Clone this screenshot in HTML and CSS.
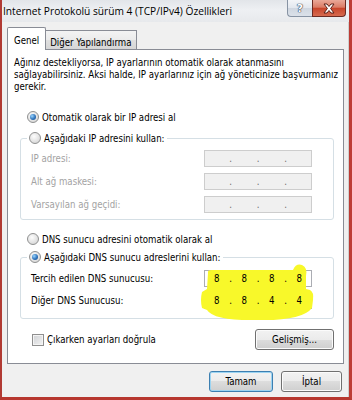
FILE: index.html
```html
<!DOCTYPE html>
<html lang="tr">
<head>
<meta charset="utf-8">
<title>Internet Protokolü sürüm 4 (TCP/IPv4) Özellikleri</title>
<link rel="stylesheet" href="styles.css">
</head>
<body>
<div class="window">
  <div class="titlebar">
    <span class="title">Internet Protokolü sürüm 4 (TCP/IPv4) Özellikleri</span>
    <div class="caption">
      <span class="cap help">?</span>
      <span class="cap close">
        <svg width="14" height="11" viewBox="0 0 14 11">
          <path d="M2 1 L5 1 L7 3.5 L9 1 L12 1 L8.6 5.5 L12 10 L9 10 L7 7.5 L5 10 L2 10 L5.4 5.5 Z" fill="#fff" stroke="#5a2018" stroke-width="1" stroke-linejoin="round"/>
        </svg>
      </span>
    </div>
  </div>

  <div class="dialog">
    <div class="tabs">
      <div class="tab active">Genel</div>
      <div class="tab">Diğer Yapılandırma</div>
    </div>

    <div class="panel">
      <p class="intro">Ağınız destekliyorsa, IP ayarlarının otomatik olarak atanmasını<br>sağlayabilirsiniz. Aksi halde, IP ayarlarınız için ağ yöneticinize başvurmanız<br>gerekir.</p>

      <div class="radio-row opt"><span class="radio checked"></span>Otomatik olarak bir IP adresi al</div>

      <div class="group group-ip">
        <div class="radio-row legend"><span class="radio"></span>Aşağıdaki IP adresini kullan:</div>
        <div class="field disabled first">
          <span class="label">IP adresi:</span>
          <div class="ip"><span class="oct"></span><span class="dot">.</span><span class="oct"></span><span class="dot">.</span><span class="oct"></span><span class="dot">.</span><span class="oct"></span></div>
        </div>
        <div class="field disabled">
          <span class="label">Alt ağ maskesi:</span>
          <div class="ip"><span class="oct"></span><span class="dot">.</span><span class="oct"></span><span class="dot">.</span><span class="oct"></span><span class="dot">.</span><span class="oct"></span></div>
        </div>
        <div class="field disabled">
          <span class="label">Varsayılan ağ geçidi:</span>
          <div class="ip"><span class="oct"></span><span class="dot">.</span><span class="oct"></span><span class="dot">.</span><span class="oct"></span><span class="dot">.</span><span class="oct"></span></div>
        </div>
      </div>

      <div class="radio-row opt opt-dns"><span class="radio"></span>DNS sunucu adresini otomatik olarak al</div>

      <div class="group group-dns">
        <div class="radio-row legend"><span class="radio checked"></span>Aşağıdaki DNS sunucu adreslerini kullan:</div>
        <div class="field first">
          <span class="label">Tercih edilen DNS sunucusu:</span>
          <div class="ip"><span class="oct">8</span><span class="dot">.</span><span class="oct">8</span><span class="dot">.</span><span class="oct">8</span><span class="dot">.</span><span class="oct">8</span></div>
        </div>
        <div class="field second">
          <span class="label">Diğer DNS Sunucusu:</span>
          <div class="ip"><span class="oct">8</span><span class="dot">.</span><span class="oct">8</span><span class="dot">.</span><span class="oct">4</span><span class="dot">.</span><span class="oct">4</span></div>
        </div>
      </div>

      <div class="bottom-row">
        <div class="check-row"><span class="checkbox"></span>Çıkarken ayarları doğrula</div>
        <button class="btn advanced">Gelişmiş...</button>
      </div>
    </div>

    <div class="footer">
      <button class="btn default">Tamam</button>
      <button class="btn">İptal</button>
    </div>
  </div>

  <svg class="highlight" width="352" height="400" viewBox="0 0 352 400">
    <path d="M208 273 Q207 270 212 270 L293 270 Q296 263 302 265 Q308 268 306 276 L306 289 L310 290 Q314 292 313 300 L312 308 Q302 321 258 320 Q214 321 207 310 L202 308 Q200 300 202 292 L207 289 Z" fill="#f8f82a"/>
  </svg>
</div>
</body>
</html>
```

FILE: styles.css
```css
* {
  box-sizing: border-box;
}

html,
body {
  margin: 0;
  padding: 0;
}

body {
  width: 352px;
  height: 400px;
  overflow: hidden;
  background: #f0f0f0;
  font-family: "DejaVu Sans Condensed", "DejaVu Sans", sans-serif;
  font-stretch: condensed;
  font-size: 9.6px;
  color: #000;
}

.window {
  position: relative;
  width: 352px;
  height: 400px;
  display: flex;
  flex-direction: column;
  background: #f0f0f0;
  border-left: 2px solid #b13a33;
  border-right: 3px solid #bd3c35;
  border-bottom: 3px solid #b7372f;
  box-shadow: inset -1px 0 0 #cfcfcf;
}

/* title bar */
.titlebar {
  height: 22px;
  flex: none;
  display: flex;
  align-items: flex-start;
  background: linear-gradient(#e2e5e9, #eef0f3 45%, #e7e9ec);
}

.title {
  font-family: "Open Sans", sans-serif;
  font-stretch: normal;
  font-size: 10.2px;
  line-height: 22px;
  padding-left: 1px;
  color: #000;
  white-space: nowrap;
}

.caption {
  margin-left: auto;
  margin-right: 3px;
  display: flex;
}

.cap {
  height: 17px;
  display: flex;
  align-items: center;
  justify-content: center;
}

.help {
  width: 25px;
  border: 1px solid #8793a3;
  border-top: 0;
  border-right: 0;
  border-radius: 0 0 0 4px;
  background: linear-gradient(#f3f5f8, #e2e7ee 50%, #cfd6e0 50%, #dbe1e9);
  color: #fff;
  font-family: "DejaVu Sans", sans-serif;
  font-stretch: normal;
  font-weight: bold;
  font-size: 11px;
  text-shadow: 0 0 1px #2d3b50, 0 0 1px #2d3b50, 0 0 1px #2d3b50;
}

.close {
  width: 34px;
  border: 1px solid #6b2a22;
  border-top: 0;
  border-radius: 0 0 4px 0;
  background: linear-gradient(#eaa898, #db7c66 45%, #c8452b 52%, #d66a4f);
}

/* dialog */
.dialog {
  flex: 1;
  display: flex;
  flex-direction: column;
  padding: 5px 5px 0 5px;
}

.tabs {
  height: 22px;
  flex: none;
  display: flex;
  align-items: flex-end;
  position: relative;
  z-index: 1;
}

.tab {
  height: 19px;
  padding: 5px 4px 0 4px;
  line-height: 14px;
  border: 1px solid #898c95;
  border-bottom: 0;
  background: linear-gradient(#f3f3f3, #ebebeb 50%, #e0e0e0 50%, #d6d6d6);
  white-space: nowrap;
}

.tab.active {
  height: 23px;
  margin-bottom: -1px;
  padding: 6px 6px 0 6px;
  background: #fff;
  border-radius: 2px 2px 0 0;
}

.tab.active + .tab {
  border-left: 0;
}

.panel {
  height: 315px;
  flex: none;
  display: flex;
  flex-direction: column;
  background: #fff;
  border: 1px solid #898c95;
  padding: 7px 6px 0 6px;
}

.intro {
  margin: 0;
  line-height: 12px;
  white-space: nowrap;
}

.radio-row {
  display: flex;
  align-items: center;
  gap: 3px;
  height: 14px;
  white-space: nowrap;
}

.opt {
  margin-top: 17px;
  margin-left: 13px;
}

.opt-dns {
  margin-top: 12px;
}

.radio {
  width: 12px;
  height: 12px;
  flex: none;
  border-radius: 50%;
  border: 1px solid #8f9090;
  background: radial-gradient(circle at 40% 35%, #fdfdfd, #e1e1e1 60%, #cfcfcf);
  display: flex;
  align-items: center;
  justify-content: center;
}

.radio.checked::after {
  content: "";
  width: 6px;
  height: 6px;
  border-radius: 50%;
  background: radial-gradient(circle at 35% 35%, #9ad6ff, #2f73bb 55%, #174a86);
}

.group {
  margin: 14px 3px 0 6px;
  border: 1px solid #d5dfe5;
  border-radius: 3px;
  padding: 0 0 6px 10px;
}

.group-dns {
  margin-top: 11px;
  padding-bottom: 9px;
}

.legend {
  margin-top: -8px;
  margin-left: -4px;
  padding: 0 2px;
  width: max-content;
  background: #fff;
}

.field {
  height: 17px;
  margin-top: 6px;
  display: flex;
  align-items: center;
}

.field.first {
  margin-top: 5px;
}

.group-dns .field.first {
  margin-top: 6px;
}

.group-dns .field.second {
  margin-top: 5px;
}

.label {
  flex: 1;
  white-space: nowrap;
}

.field.disabled .label {
  color: #a3a3a3;
}

.ip {
  width: 108px;
  height: 17px;
  margin-right: 21px;
  display: flex;
  align-items: center;
  border: 1px solid #abadb3;
  background: #fff;
}

.field.disabled .ip {
  border-color: #cdcdcd;
  background: #f0f0f0;
  color: #6d6d6d;
}

.oct {
  flex: 1;
  text-align: center;
  position: relative;
  z-index: 2;
}

.dot {
  width: 4px;
  text-align: center;
  position: relative;
  z-index: 2;
}

.bottom-row {
  margin-top: 10px;
  height: 21px;
  display: flex;
  align-items: center;
}

.check-row {
  display: flex;
  align-items: center;
  gap: 3px;
  margin-left: 18px;
  white-space: nowrap;
}

.checkbox {
  width: 12px;
  height: 12px;
  border: 1px solid #8f8f8f;
  background: linear-gradient(135deg, #cfd1d4, #f3f3f3);
  box-shadow: inset 0 0 0 1px #f4f4f4;
}

.btn {
  height: 21px;
  padding: 0;
  font: inherit;
  color: #000;
  border: 1px solid #707070;
  border-radius: 3px;
  background: linear-gradient(#f2f2f2, #ebebeb 50%, #dddddd 50%, #cfcfcf);
  box-shadow: inset 0 0 0 1px #fbfbfb;
}

.advanced {
  width: 79px;
  margin-left: auto;
  margin-right: 3px;
}

.footer {
  margin-top: 7px;
  padding-right: 2px;
  display: flex;
  justify-content: flex-end;
  gap: 8px;
}

.footer .btn {
  width: 61px;
}

.footer .btn.default {
  width: 64px;
  border-color: #3c7fb1;
  box-shadow: inset 0 0 0 1px #9cd4f2;
}

.highlight {
  position: absolute;
  left: -2px;
  top: 0;
  z-index: 1;
  pointer-events: none;
}
```
